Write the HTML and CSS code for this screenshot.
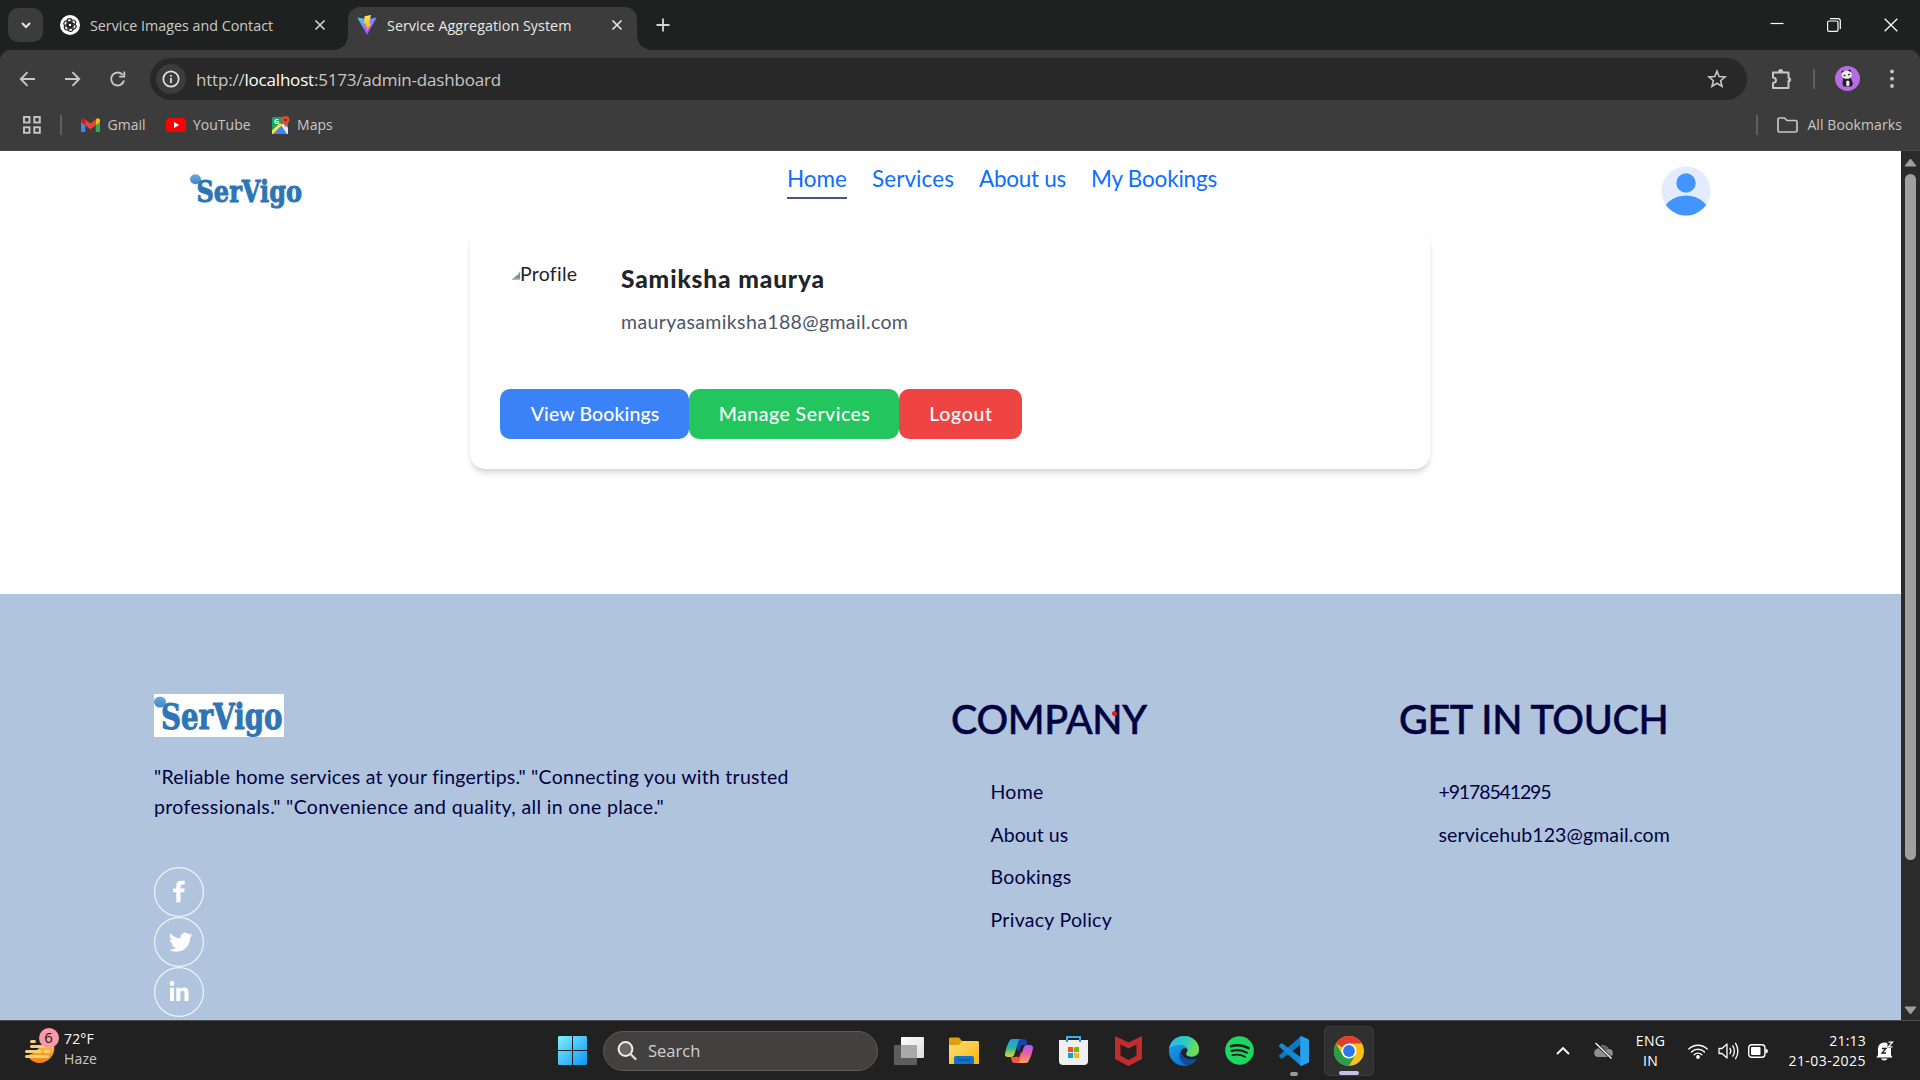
FILE: index.html
```html
<!DOCTYPE html>
<html lang="en">
<head>
<meta charset="utf-8">
<title>Service Aggregation System</title>
<link rel="stylesheet" href="styles.css">
</head>
<body>
<div class="screen">
  <div class="tabstrip">
    <div class="tab-search"><svg width="10" height="7" viewBox="0 0 10 7"><path d="M1 1l4 4 4-4" fill="none" stroke="#e3e3e3" stroke-width="2"/></svg></div>
    <div class="tab tab-idle">
      <svg class="favicon" width="20" height="20" viewBox="0 0 20 20"><circle cx="10" cy="10" r="10" fill="#fff"/><g fill="none" stroke="#222" stroke-width="1.1"><rect x="7" y="3.6" width="5" height="8.6" rx="2.5"/><rect x="7" y="3.6" width="5" height="8.6" rx="2.5" transform="rotate(60 10 10)"/><rect x="7" y="3.6" width="5" height="8.6" rx="2.5" transform="rotate(120 10 10)"/><rect x="7" y="3.6" width="5" height="8.6" rx="2.5" transform="rotate(180 10 10)"/><rect x="7" y="3.6" width="5" height="8.6" rx="2.5" transform="rotate(240 10 10)"/><rect x="7" y="3.6" width="5" height="8.6" rx="2.5" transform="rotate(300 10 10)"/></g></svg>
      <span class="tab-title">Service Images and Contact</span>
      <svg width="12" height="12" viewBox="0 0 12 12"><path d="M1.5 1.5l9 9M10.5 1.5l-9 9" stroke="#d0d0d0" stroke-width="1.7"/></svg>
    </div>
    <div class="tab tab-active">
      <svg class="favicon" width="20" height="20" viewBox="0 0 20 20"><defs><linearGradient id="va" x1="0" y1="0" x2=".6" y2="1"><stop offset="0" stop-color="#41d1ff"/><stop offset="1" stop-color="#bd34fe"/></linearGradient><linearGradient id="vb" x1="0" y1="0" x2="0" y2="1"><stop offset="0" stop-color="#ffea83"/><stop offset=".2" stop-color="#ffdd35"/><stop offset="1" stop-color="#ffa800"/></linearGradient></defs><path d="M.3 2.5L10 20 19.7 2.5 10.5 4.2z" fill="url(#va)"/><path d="M14 0L7.6 1.300 7 9l2.400-.4-.7 3.500 1.700-.5L9.500 17l4.800-8.800-2.400.4z" fill="url(#vb)"/></svg>
      <span class="tab-title">Service Aggregation System</span>
      <svg width="12" height="12" viewBox="0 0 12 12"><path d="M1.5 1.5l9 9M10.5 1.5l-9 9" stroke="#e3e3e3" stroke-width="1.7"/></svg>
    </div>
    <svg class="new-tab" width="14" height="14" viewBox="0 0 14 14"><path d="M7 .5v13M.5 7h13" stroke="#d5d5d5" stroke-width="1.8"/></svg>
    <div class="window-controls">
      <svg width="14" height="14" viewBox="0 0 14 14"><path d="M.5 5.500h13" stroke="#fff" stroke-width="1.200"/></svg>
      <svg width="14" height="14" viewBox="0 0 14 14"><rect x=".6" y="3" width="10.400" height="10.400" rx="1.500" fill="none" stroke="#fff" stroke-width="1.200"/><path d="M3 .7h8a2.300 2.300 0 0 1 2.300 2.300v8" fill="none" stroke="#fff" stroke-width="1.200"/></svg>
      <svg width="14" height="14" viewBox="0 0 14 14"><path d="M.7.7l12.600 12.600M13.300.7L.7 13.300" stroke="#fff" stroke-width="1.300"/></svg>
    </div>
  </div>

  <div class="toolbar">
    <svg class="nav-icon" width="16" height="16" viewBox="0 0 16 16"><path d="M15 8H1M7.500 1.200L.8 8l6.700 6.800" fill="none" stroke="#c7c7c7" stroke-width="1.900"/></svg>
    <svg class="nav-icon" width="16" height="16" viewBox="0 0 16 16"><path d="M0 8h14M7.500 1.200L14.200 8l-6.700 6.800" fill="none" stroke="#c7c7c7" stroke-width="1.900"/></svg>
    <svg class="nav-icon reload" width="16" height="16" viewBox="0 0 16 16"><path d="M14 9.500A6.500 6.500 0 1 1 12.800 4" fill="none" stroke="#c7c7c7" stroke-width="1.900"/><path d="M15.200.5v6H9.200V4.700h4.200V.5z" fill="#c7c7c7"/></svg>
    <div class="omnibox">
      <div class="site-info"><svg width="18" height="18" viewBox="0 0 18 18"><circle cx="9" cy="9" r="7.700" fill="none" stroke="#e3e3e3" stroke-width="1.700"/><path d="M9 8v5M9 5v1.800" stroke="#e3e3e3" stroke-width="1.700"/></svg></div>
      <span class="url">http://<span class="host">localhost</span>:5173/admin-dashboard</span>
      <svg class="star" width="20" height="20" viewBox="0 0 20 20"><path d="M10 2.200l2.200 5.400 5.800.4-4.400 3.700 1.400 5.700-5-3.100-5 3.100 1.400-5.700L2 8l5.800-.4z" fill="none" stroke="#c7c7c7" stroke-width="1.600"/></svg>
    </div>
    <svg class="puzzle" width="22" height="22" viewBox="0 0 22 22"><path d="M2 4.500h15.500v5.300a2 2 0 0 1 0 3.400V20H2v-5c4-.5 4-5 0-5.500z" fill="none" stroke="#c7c7c7" stroke-width="2" stroke-linejoin="round"/><path d="M7 4a2.600 2.900 0 0 1 5.200 0zM18 9a2.700 2.700 0 0 1 0 5.300z" fill="#c7c7c7"/></svg>
    <i class="divider toolbar-divider"></i>
    <svg class="avatar" width="25" height="25" viewBox="0 0 25 25"><circle cx="12.500" cy="12.500" r="12.500" fill="#b56be3"/><circle cx="8" cy="6" r="1.500" fill="#222"/><circle cx="14.500" cy="5" r="1.500" fill="#222"/><path d="M8 12h8l2 6-1.500 2.500H8.500L7.500 18z" fill="#222"/><ellipse cx="11.700" cy="8.800" rx="5.200" ry="4" fill="#eee"/><path d="M8.500 10l2-.8M13 9l2-.8" stroke="#222" stroke-width="1.300"/><rect x="11.200" y="14.500" width="3.200" height="5.500" rx="1.500" fill="#eee"/></svg>
    <svg class="menu-dots" width="4" height="20" viewBox="0 0 4 20"><g fill="#c7c7c7"><circle cx="2" cy="2.500" r="1.900"/><circle cx="2" cy="9.700" r="1.900"/><circle cx="2" cy="17" r="1.900"/></g></svg>
  </div>

  <div class="bookmarks">
    <svg class="apps" width="18" height="18" viewBox="0 0 18 18"><g fill="none" stroke="#c7c7c7" stroke-width="1.900"><rect x="1" y="1" width="5.500" height="5.500"/><rect x="11.300" y="1" width="5.500" height="5.500"/><rect x="1" y="11.300" width="5.500" height="5.500"/><rect x="11.300" y="11.300" width="5.500" height="5.500"/></g></svg>
    <i class="divider"></i>
    <svg class="gmail" width="19" height="14" viewBox="0 0 19 14"><path d="M0 2.500L4.300 5v9H1.300A1.300 1.300 0 0 1 0 12.700z" fill="#4285f4"/><path d="M19 2.500L14.700 5v9h3A1.300 1.300 0 0 0 19 12.700z" fill="#34a853"/><path d="M14.700 1.500C17 -.8 19 .5 19 2.500V4l-4.300 3.300z" fill="#fbbc04"/><path d="M4.300 1.500C2-.8 0 .5 0 2.500V4l4.300 3.300z" fill="#c5221f"/><path d="M4.300 1.500l5.200 4 5.200-4v5.800l-5.200 4-5.200-4z" fill="#ea4335"/></svg>
    <span class="bm-label">Gmail</span>
    <svg class="youtube" width="20" height="14" viewBox="0 0 20 14"><rect width="20" height="14" rx="3.500" fill="#f00"/><path d="M8 4l5.200 3L8 10z" fill="#fff"/></svg>
    <span class="bm-label">YouTube</span>
    <svg class="maps" width="18" height="18" viewBox="0 0 18 18"><rect y="1" width="16" height="17" rx="1.500" fill="#1ea362"/><path d="M0 18L9 8.500l7 9.500z" fill="#4285f4"/><path d="M0 14.500L8 7l2 2-9 9H0z" fill="#ffe047"/><path d="M9 9l3-2 4 5v6h-1z" fill="#e8eaed"/><text x="2" y="8" class="maps-g">G</text><path d="M13.500 0A4 4 0 0 1 17.500 4c0 3-4 4.500-4 8 0-3.500-4-5-4-8a4 4 0 0 1 4-4z" fill="#dd4b3e"/><circle cx="13.500" cy="4" r="1.400" fill="#822f2b"/></svg>
    <span class="bm-label">Maps</span>
    <i class="divider push"></i>
    <svg class="folder" width="21" height="16" viewBox="0 0 21 16"><path d="M1 13V2.500C1 1.600 1.600 1 2.500 1h5L10 3.500h8.500c.9 0 1.500.6 1.500 1.500v8.500c0 .9-.6 1.500-1.500 1.500h-16C1.600 15 1 14.400 1 13.500z" fill="none" stroke="#c7c7c7" stroke-width="1.700"/></svg>
    <span class="bm-label all">All Bookmarks</span>
  </div>

  <div class="viewport">
    <main class="page">
      <header class="site-header">
        <svg class="logo" width="114" height="36" viewBox="0 0 114 36"><defs><linearGradient id="dot" x1="0" y1="0" x2="0" y2="1"><stop offset="0" stop-color="#6aa9e4"/><stop offset="1" stop-color="#3f87cc"/></linearGradient></defs><ellipse cx="5.500" cy="5.300" rx="5.500" ry="5" fill="url(#dot)"/><text class="logo-text" x="6.500" y="28" textLength="105.500" lengthAdjust="spacingAndGlyphs">SerVigo</text></svg>
        <nav class="site-nav">
          <a class="current">Home</a>
          <a class="n-services">Services</a>
          <a class="n-about">About us</a>
          <a class="n-bookings">My Bookings</a>
        </nav>
        <svg class="user" width="50" height="50" viewBox="0 0 50 50"><defs><clipPath id="uc"><circle cx="25" cy="25" r="24.500"/></clipPath></defs><circle cx="25" cy="25" r="24.500" fill="#e5ebff"/><circle cx="25" cy="17" r="9.700" fill="#4294ff"/><ellipse cx="25" cy="50" rx="24" ry="20.500" fill="#4294ff" clip-path="url(#uc)"/></svg>
      </header>

      <section class="card">
        <div class="profile">
          <div class="photo"><svg width="8" height="9" viewBox="0 0 8 9"><path d="M0 8Q3.500 6 8 0v8z" fill="#c9d5e8"/><path d="M1 7.500L8 2.500v5z" fill="#57a652"/><path d="M0 8.300h7.700V1" fill="none" stroke="#8b8b8b" stroke-width=".8"/></svg><span class="alt">Profile</span></div>
          <div class="identity">
            <h2>Samiksha maurya</h2>
            <p>mauryasamiksha188@gmail.com</p>
          </div>
        </div>
        <div class="actions">
          <button class="btn blue">View Bookings</button>
          <button class="btn green">Manage Services</button>
          <button class="btn red">Logout</button>
        </div>
      </section>

      <footer class="site-footer">
        <div class="about">
          <div class="footer-logo"><svg width="130" height="43" viewBox="0 0 130 43"><ellipse cx="6" cy="8" rx="6" ry="5.500" fill="url(#dot)"/><text class="logo-text big" x="7" y="35" textLength="121.500" lengthAdjust="spacingAndGlyphs">SerVigo</text></svg></div>
          <p><span class="f-one">"Reliable home services at your fingertips." "Connecting you with trusted</span><br><span class="f-two">professionals." "Convenience and quality, all in one place."</span></p>
          <div class="socials">
            <svg width="50" height="50" viewBox="0 0 50 50"><circle cx="25" cy="25" r="24.400" fill="none" stroke="#fff" stroke-opacity=".8" stroke-width="1.200"/><path d="M22.300 35.300V25.200H19v-3.800h3.300v-2.600c0-3.400 1.800-5 5-5h3.500v3.700h-2.300c-1.400 0-2 .6-2 1.900v2h4.200l-.5 3.800h-3.700v10.100z" fill="#fff"/></svg>
            <svg width="50" height="50" viewBox="0 0 50 50"><circle cx="25" cy="25" r="24.400" fill="none" stroke="#fff" stroke-opacity=".8" stroke-width="1.200"/><path transform="translate(15 13.500) scale(.98)" d="M23.950 4.570a10 10 0 0 1-2.820.77 4.960 4.960 0 0 0 2.160-2.720c-.95.550-2 .95-3.130 1.180a4.920 4.920 0 0 0-8.380 4.480C7.690 8.100 4.070 6.130 1.640 3.160a4.920 4.920 0 0 0 1.520 6.570 4.900 4.900 0 0 1-2.230-.61v.06c0 2.380 1.700 4.370 3.950 4.820a5 5 0 0 1-2.210.09 4.940 4.940 0 0 0 4.600 3.420A9.870 9.870 0 0 1 0 19.540a14 14 0 0 0 7.550 2.210c9.050 0 14-7.500 14-13.980 0-.21 0-.42-.02-.63a9.940 9.940 0 0 0 2.460-2.550z" fill="#fff"/></svg>
            <svg width="50" height="50" viewBox="0 0 50 50"><circle cx="25" cy="25" r="24.400" fill="none" stroke="#fff" stroke-opacity=".8" stroke-width="1.200"/><circle cx="18" cy="16.500" r="2.400" fill="#fff"/><path d="M16 20.700h4V34h-4zM22.300 20.700h3.900v1.800c.8-1.300 2.200-2.100 4-2.100 3.300 0 4.300 2.200 4.300 5.600v8h-4v-7.300c0-1.800-.4-2.900-1.900-2.900-1.700 0-2.300 1.200-2.300 2.900V34h-4z" fill="#fff"/></svg>
          </div>
        </div>
        <div class="col company">
          <h3>COMPANY</h3>
          <ul>
            <li>Home</li>
            <li class="l-about">About us</li>
            <li>Bookings</li>
            <li>Privacy Policy</li>
          </ul>
          <i class="red-dot"></i>
        </div>
        <div class="col contact">
          <h3>GET IN TOUCH</h3>
          <ul>
            <li class="l-phone">+9178541295</li>
            <li class="l-mail">servicehub123@gmail.com</li>
          </ul>
        </div>
      </footer>
    </main>
    <div class="scrollbar">
      <svg width="13" height="9" viewBox="0 0 13 9"><path d="M6.500 1L12 8H1z" fill="#9f9f9f" stroke="#9f9f9f" stroke-linejoin="round"/></svg>
      <div class="thumb"></div>
      <svg class="down" width="13" height="9" viewBox="0 0 13 9"><path d="M6.500 8L12 1H1z" fill="#9f9f9f" stroke="#9f9f9f" stroke-linejoin="round"/></svg>
    </div>
  </div>

  <div class="taskbar">
    <div class="weather">
      <svg width="36" height="38" viewBox="0 0 36 38"><defs><linearGradient id="sun" x1="0" y1="0" x2="0" y2="1"><stop offset="0" stop-color="#f9bd30"/><stop offset="1" stop-color="#f07c12"/></linearGradient></defs><path d="M16 17.500h13.300C30 26 23.500 34 14.500 34 9.500 34 6 31.500 3.500 28l1-2.500 3-1z" fill="url(#sun)"/><g stroke="#f3cf7c" stroke-width="3" stroke-linecap="round"><path d="M6.500 12.500h3M6.500 17.500h21M1.500 22.500h14M20 22.500h4M1.500 27.500h21"/></g><circle cx="24" cy="9" r="10" fill="#ff99a4"/><text x="23.500" y="14.300" class="badge-text">6</text></svg>
      <div class="weather-text"><span class="temp">72°F</span><span class="haze">Haze</span></div>
    </div>
    <div class="dock">
      <svg class="start" width="29" height="29" viewBox="0 0 29 29"><defs><linearGradient id="win" x1="0" y1="0" x2="1" y2="1"><stop offset="0" stop-color="#7df1ff"/><stop offset="1" stop-color="#0d93f5"/></linearGradient></defs><path d="M1 0h13v14H0V1zM15 0h13l1 1v13H15zM0 15h14v14H1l-1-1zM15 15h14v13l-1 1H15z" fill="url(#win)"/></svg>
      <div class="search"><svg width="20" height="20" viewBox="0 0 20 20"><circle cx="8.500" cy="8" r="6.900" fill="#666" stroke="#eee" stroke-width="2"/><path d="M13.500 13l5 5" stroke="#ddd" stroke-width="2.400" stroke-linecap="round"/></svg><span>Search</span></div>
      <svg class="taskview" width="30" height="28" viewBox="0 0 30 28"><defs><linearGradient id="tv" x1="0" y1="0" x2="1" y2="1"><stop offset="0" stop-color="#fff"/><stop offset="1" stop-color="#ddd"/></linearGradient></defs><rect x="7" width="23" height="21" rx="1" fill="url(#tv)"/><rect y="8" width="23" height="20" rx="1" fill="#6d6d6d" fill-opacity=".8"/><path d="M7 8h16v13H7z" fill="#a9a9a9"/></svg>
      <svg class="files" width="30" height="27" viewBox="0 0 30 27"><defs><linearGradient id="fo" x1="0" y1="0" x2="1" y2="1"><stop offset="0" stop-color="#ffe07a"/><stop offset="1" stop-color="#f9b50f"/></linearGradient></defs><path d="M0 8V1.500L1 .5h9L13 4h16v8H0z" fill="#e0a008"/><path d="M0 8h10l3-4h16l1 1v22H0z" fill="url(#fo)"/><path d="M5 27v-6a2 2 0 0 1 2-2h16a2 2 0 0 1 2 2v6z" fill="#0f73c6"/><path d="M9 23h12" stroke="#0a4f95" stroke-width="1.300"/></svg>
      <svg class="copilot" width="28" height="26" viewBox="0 0 28 26"><defs><linearGradient id="c1" x1="0" y1="0" x2="0" y2="1"><stop offset="0" stop-color="#1e9be8"/><stop offset=".5" stop-color="#2bb6a0"/><stop offset="1" stop-color="#e8d12c"/></linearGradient><linearGradient id="c2" x1="0" y1="0" x2="0" y2="1"><stop offset="0" stop-color="#a45bed"/><stop offset=".5" stop-color="#ec5fa3"/><stop offset="1" stop-color="#ffa35a"/></linearGradient></defs><path d="M7 1h12q2 0 2.500 2L22 7h-4q-2 0-2.700 2L14 14z" fill="#1546b8"/><path d="M21 25H9q-2 0-2.500-3L6 19h4q2 0 2.600-2L15 10z" fill="#f0563c"/><path d="M7 1h9q-2 0-2.700 2.200L9.500 16q-1 3-3.500 3H3q-3.500 0-3-3.500Q1.500 8 4 3.500 5 1 7 1z" fill="url(#c1)"/><path d="M21 25h-9q2 0 2.700-2.200L18.500 10Q19.500 7 22 7h3q3.500 0 3 3.500-1.500 7.500-4 12Q23 25 21 25z" fill="url(#c2)"/><path d="M15.300 9Q16 7 18 7h1l-5 12h-2.200z" fill="#212121"/></svg>
      <svg class="store" width="29" height="29" viewBox="0 0 29 29"><path d="M8 5V1h13v4" fill="none" stroke="#30b4f2" stroke-width="2"/><path d="M0 4h29v21a4 4 0 0 1-4 4H4a4 4 0 0 1-4-4z" fill="#f0f0f0"/><path d="M8 4v2M21 4v2" stroke="#1790d8" stroke-width="2"/><path d="M9 11h5v5H9z" fill="#f25022"/><path d="M15 11h5v5h-5z" fill="#7fba00"/><path d="M9 17h5v5H9z" fill="#00a4ef"/><path d="M15 17h5v5h-5z" fill="#ffb900"/></svg>
      <svg class="mcafee" width="27" height="30" viewBox="0 0 27 30"><path d="M0 0l13.500 6.500L27 0v23l-13.500 7L0 23zM5.500 8.500v11.300l8 4.200 8-4.200V8.500l-8 4z" fill="#c22c2c" fill-rule="evenodd"/></svg>
      <svg class="edge" width="30" height="30" viewBox="0 0 30 30"><defs><linearGradient id="e1" x1="0" y1="0" x2="1" y2=".3"><stop offset="0" stop-color="#2fb4ee"/><stop offset=".55" stop-color="#2cc7c8"/><stop offset="1" stop-color="#6fe04b"/></linearGradient><linearGradient id="e2" x1="0" y1="0" x2=".6" y2="1"><stop offset="0" stop-color="#1eaaf0"/><stop offset="1" stop-color="#0a6fce"/></linearGradient></defs><circle cx="15" cy="15" r="15" fill="url(#e2)"/><path d="M0 13C1 5 7.500 0 15 0c9 0 15 6.500 15 13 0 5-3.500 7.500-7.500 7.500-3.500 0-5.500-1.300-5.500-2.500 0-.8 1.500-1.500 1.500-4C18.500 11 15.500 9 12 9 6 9 1 11 0 13z" fill="url(#e1)"/><path d="M12 14.500c-4 6 0 12.500 6 15.100 4-.8 8-3.600 10-7.600-6 3-16 1-16-7.500z" fill="#114a9c"/><path d="M18.500 13c0 3-1.500 3.500-1.500 5 0 1.500 2 3 5.500 3 3 0 5.500-1.500 8-4l.5 4-2.500 1.500C22 25 13 23 12 16c0-3 3-5 6.500-3z" fill="#212121"/></svg>
      <svg class="spotify" width="29" height="29" viewBox="0 0 29 29"><circle cx="14.500" cy="14.500" r="14.300" fill="#1ed760"/><g fill="none" stroke="#1c1c1c" stroke-linecap="round"><path d="M6 10.200c6-1.700 12.500-1 17.600 1.900" stroke-width="2.600"/><path d="M6.700 14.900c5-1.400 10.500-.8 15 1.700" stroke-width="2.200"/><path d="M7.500 19.200c4.300-1 8.600-.6 12.500 1.600" stroke-width="1.800"/></g></svg>
      <div class="app-slot vscode"><svg width="30" height="30" viewBox="0 0 30 30"><path d="M22 0v8.500L3.500 22.500Q2.500 23 1.700 22.300L.3 20.700q-.6-.8.2-1.600z" fill="#0a79c0"/><path d="M22 30v-8.500L3.500 7.500Q2.500 7 1.700 7.700L.3 9.300q-.6.800.2 1.600z" fill="#1489d4"/><path d="M22 0l7 3q1 .5 1 1.500v21q0 1-1 1.500l-7 3q-.8-.3-.8-1.500v-27Q21.200.5 22 0z" fill="#27a0f0"/></svg><i class="dot-indicator"></i></div>
      <div class="app-slot chrome"><svg width="30" height="30" viewBox="0 0 30 30"><circle cx="15" cy="15" r="15" fill="#fbc116"/><path d="M15 15L2 7.500A15 15 0 0 1 28 7.500H15z" fill="#e33b2e"/><path d="M2 7.500A15 15 0 0 0 15 30l6.500-11.200L15 15 8.500 18.800z" fill="#2a9d48"/><circle cx="15" cy="15" r="7.500" fill="#fff"/><circle cx="15" cy="15" r="5.900" fill="#2a78ea"/></svg><i class="bar-indicator"></i></div>
    </div>
    <div class="tray">
      <svg class="chev" width="14" height="9" viewBox="0 0 14 9"><path d="M1 8l6-6 6 6" fill="none" stroke="#fff" stroke-width="1.900"/></svg>
      <svg class="cloud" width="20" height="16" viewBox="0 0 20 16"><path d="M4.500 14a4.200 4.200 0 0 1 0-8.200A6 6 0 0 1 15.500 6a4 4 0 0 1 .5 8z" fill="#8f8f8f"/><path d="M5 5.500A6 6 0 0 1 15.500 6l-5 3z" fill="#646464"/><path d="M2.500 0l16 15.500" stroke="#212121" stroke-width="3"/><path d="M2.500 0l16 15.500" stroke="#fff" stroke-width="1.300"/></svg>
      <div class="lang"><span>ENG</span><span>IN</span></div>
      <svg class="wifi" width="20" height="16" viewBox="0 0 20 16"><g fill="none" stroke="#fff" stroke-width="1.400" stroke-linecap="round"><path d="M.8 6a13 13 0 0 1 18.400 0M3.500 8.900a9.200 9.200 0 0 1 13 0M6.200 11.700a5.400 5.400 0 0 1 7.600 0"/></g><circle cx="10" cy="14" r="1.900" fill="#fff"/></svg>
      <svg class="sound" width="21" height="18" viewBox="0 0 21 18"><g fill="none" stroke="#fff" stroke-width="1.300" stroke-linecap="round" stroke-linejoin="round"><path d="M1 6.500h3L9 2v14l-5-4.500H1zM12 6.300q1.700 2.700 0 5.400M14.800 3.800q3.200 5.200 0 10.400M17.600 1.300q4.600 7.700 0 15.400"/></g></svg>
      <svg class="battery" width="20" height="14" viewBox="0 0 20 14"><rect x=".7" y=".7" width="16.200" height="12.600" rx="3" fill="none" stroke="#fff" stroke-width="1.400"/><rect x="3" y="3" width="9.500" height="8" rx="1" fill="#fff"/><path d="M17.500 4.500q2.500.5 2.500 2.500t-2.500 2.500z" fill="#fff"/></svg>
      <div class="clock"><span>21:13</span><span class="date">21-03-2025</span></div>
      <svg class="bell" width="18" height="20" viewBox="0 0 18 20"><path d="M2 14V7.500A6 6 0 0 1 8 1.500c4 0 7 2 7 6.500v6l1.500 2.500H.3zM5 17.500h6.500a3.300 2.500 0 0 1-6.500 0z" fill="#fff"/><path d="M6 7.500h4l-4 4.500h4" fill="none" stroke="#212121" stroke-width="1.300"/><path d="M11.500 0H18v6.800h-6.500z" fill="#212121"/><path d="M12.500 1.200h4l-4 4.600h4" fill="none" stroke="#fff" stroke-width="1.300"/></svg>
    </div>
  </div>
</div>
</body>
</html>
```
FILE: styles.css
```css
* { box-sizing: border-box; }
body { margin: 0; background: #fff; font-family: "Open Sans", "Noto Sans", sans-serif; }
svg { display: block; flex: none; overflow: visible; }
.screen { width: 1920px; height: 1080px; overflow: hidden; display: flex; flex-direction: column; }

/* tab strip */
.tabstrip { position: relative; z-index: 1; flex: none; height: 50px; background: #1f2120; display: flex; align-items: flex-start; white-space: nowrap; }
.tab-search { width: 35px; height: 34px; margin: 8px 0 0 8px; border-radius: 10px; background: #3c3c3c; display: flex; align-items: center; justify-content: center; }
.tab { height: 43px; margin-top: 7px; display: flex; align-items: center; padding-bottom: 7px; font-size: 14.3px; }
.tab-idle { width: 305px; padding-left: 17px; color: #c9c9c9; }
.tab-active { width: 289px; padding-left: 9px; background: #3c3c3c; color: #e8e8e8; border-radius: 12px 12px 0 0; position: relative; letter-spacing: .05px; }
.tab-active::before, .tab-active::after { content: ""; position: absolute; bottom: 0; width: 14px; height: 14px; }
.tab-active::before { left: -14px; background: radial-gradient(circle at 0 0, transparent 13.5px, #3c3c3c 14px); }
.tab-active::after { right: -14px; background: radial-gradient(circle at 100% 0, transparent 13.5px, #3c3c3c 14px); }
.tab-title { flex: none; width: 224px; margin-left: 10px; }
.new-tab { margin: 18px 0 0 19px; }
.window-controls { margin: 18px 22px 0 auto; display: flex; gap: 43px; }

/* toolbar */
.toolbar { flex: none; height: 57px; background: #3c3c3c; border-radius: 10px 10px 0 0; box-shadow: 0 -10px 0 #1f2120; display: flex; align-items: center; padding: 0 26px 0 20px; }
.nav-icon { margin-right: 28.5px; }
.nav-icon.reload { margin: 0 28px 0 .5px; }
.omnibox { width: 1597px; height: 42px; margin-left: -3.5px; border-radius: 21px; background: #282828; display: flex; align-items: center; padding: 0 20px 0 6px; }
.site-info { width: 30px; height: 30px; border-radius: 50%; background: #3c3c3c; display: flex; align-items: center; justify-content: center; }
.url { margin-left: 10px; padding-top: 1px; font-size: 17px; letter-spacing: -.2px; color: #c7c7c7; white-space: nowrap; }
.host { color: #fff; }
.star { margin-left: auto; }
.puzzle { margin-left: 24px; }
.divider { flex: none; width: 2px; height: 20px; background: #5e5e5e; }
.toolbar-divider { margin-left: 20px; }
.avatar { margin-left: 20px; }
.menu-dots { margin-left: auto; }

/* bookmarks */
.bookmarks { flex: none; height: 44px; background: #3c3c3c; border-bottom: 1px solid #4a4a4a; display: flex; align-items: center; padding: 0 18px 8px 23px; font-size: 14px; color: #c7c7c7; white-space: nowrap; }
.bookmarks .divider { margin: 0 19px; }
.bm-label { margin-left: 7.5px; }
.bm-label.all { margin-left: 9px; letter-spacing: .1px; }
.youtube { margin-left: 20px; }
.maps { margin-left: 21px; }
.maps-g { font: bold 7px "Open Sans", sans-serif; fill: #fff; }
.bookmarks .push { margin-left: auto; }

/* page */
.viewport { flex: none; height: 869px; display: flex; }
.page { width: 1901px; background: #fff; color: #212529; font-family: Lato, sans-serif; font-size: 19.5px; display: flex; flex-direction: column; }
.site-header { height: 78px; display: flex; padding: 0 190px; }
.logo { margin-top: 23px; }
.logo-text { font: bold 30px "DejaVu Serif", serif; fill: #2e75b6; stroke: #2e75b6; stroke-width: 1px; }
.logo-text.big { font-size: 35px; }
.site-nav { margin: 12px 0 0 483px; display: flex; gap: 25px; font-size: 22.5px; line-height: 31px; color: #0d6efd; white-space: nowrap; }
.site-nav a { height: 36px; }
.site-nav .current { border-bottom: 2px solid #495388; }
.n-services { letter-spacing: .076px; }
.n-about { letter-spacing: -.275px; }
.n-bookings { letter-spacing: -.197px; }
.user { margin: 14.5px 0 0 auto; }
.card { width: 960px; height: 240px; margin: 0 0 0 470px; border-radius: 15px; padding: 30px; box-shadow: 0 5px 7px -1px rgba(0,0,0,.12), 0 3px 5px -2px rgba(0,0,0,.1); white-space: nowrap; clip-path: inset(0 -20px -20px -20px); }
.profile { height: 130px; display: flex; }
.photo { width: 121px; padding-left: 12px; display: flex; line-height: 30px; }
.photo svg { margin-top: 12px; }
.alt { letter-spacing: .266px; }
.identity h2 { margin: 5px 0 0; font-size: 24.5px; line-height: 30px; font-weight: 900; letter-spacing: .867px; }
.identity p { margin: 13px 0 0; line-height: 30px; color: #4a5568; letter-spacing: .37px; }
.actions { display: flex; }
.btn { height: 50px; border: 0; border-radius: 10px; padding: 0 0 2px 1px; color: #fff; font: 500 19.5px Lato, sans-serif; }
.blue { width: 189px; background: #3b82f6; letter-spacing: .1px; }
.green { width: 210px; background: #22c55e; letter-spacing: .48px; }
.red { width: 123px; background: #ef4444; letter-spacing: .7px; }

/* footer */
.site-footer { height: 426px; margin-top: 125px; background: #b0c4de; color: #02023f; display: flex; padding: 100px 0 0 154px; white-space: nowrap; overflow: hidden; }
.about { width: 797px; }
.footer-logo { width: 130px; height: 43px; background: #fff; }
.about p { margin: 25px 0 45px; line-height: 30px; }
.f-one { letter-spacing: .254px; }
.f-two { letter-spacing: .358px; }
.col { position: relative; width: 448px; }
.col h3 { margin: 0; font-size: 39.5px; line-height: 49px; font-weight: 500; letter-spacing: -.37px; -webkit-text-stroke: .5px currentColor; }
.col ul { list-style: none; margin: 34px 0 0; padding: 0 0 0 39.5px; }
.col li { height: 42.6px; line-height: 30px; letter-spacing: .28px; }
.col .l-about { letter-spacing: .05px; }
.col .l-phone { letter-spacing: -1.13px; }
.col .l-mail { letter-spacing: .11px; }
.red-dot { position: absolute; left: 161px; top: 17px; width: 5px; height: 5px; border-radius: 50%; background: #f01818; }

.scrollbar { width: 19px; background: #2b2b2b; display: flex; flex-direction: column; align-items: center; padding: 7px 0 5px; }
.thumb { width: 11px; height: 686px; margin-top: 7px; border-radius: 6px; background: #9f9f9f; }
.down { margin-top: auto; }

/* taskbar */
.taskbar { flex: none; height: 60px; background: #212121; border-top: 1px solid #4c4c4a; display: flex; color: #fff; font-size: 14px; white-space: nowrap; }
.weather { width: 558px; display: flex; padding: 8px 0 0 25px; }
.badge-text { font: 15px "Open Sans", sans-serif; fill: #1b1b1b; text-anchor: middle; }
.weather-text { display: flex; flex-direction: column; align-items: flex-start; line-height: 20px; margin-left: 3px; }
.temp { letter-spacing: .15px; }
.haze { color: #c8c8c8; letter-spacing: .15px; }
.dock { width: 816px; display: flex; align-items: center; }
.search { width: 275px; height: 40px; margin-left: 16px; border-radius: 20px; border: 1px solid #5b5958; background: #424140; display: flex; align-items: center; padding-left: 13px; font-size: 16.5px; color: #d0d0d0; }
.search span { margin-left: 11px; }
.taskview { margin-left: 16px; }
.files { margin-left: 25px; }
.copilot { margin-left: 26px; }
.store { margin-left: 26px; }
.mcafee { margin-left: 27px; }
.edge { margin-left: 27px; }
.spotify { margin-left: 26px; }
.app-slot { position: relative; width: 50px; height: 50px; display: flex; align-items: center; justify-content: center; }
.vscode { margin-left: 15px; }
.chrome { margin-left: 5px; background: #303030; border: 1px solid #3b3b3b; border-radius: 5px; }
.app-slot i { position: absolute; bottom: 0; height: 4px; border-radius: 2px; }
.dot-indicator { left: 21px; width: 8px; background: #9a9a9a; }
.bar-indicator { left: 14px; width: 20px; background: #c5bdec; }
.tray { flex: 1; display: flex; align-items: center; padding-left: 182px; }
.cloud { margin-left: 23px; }
.lang { width: 75px; display: flex; flex-direction: column; align-items: center; line-height: 20px; letter-spacing: .3px; }
.sound { margin-left: 10px; }
.battery { margin-left: 9px; }
.clock { margin-left: auto; display: flex; flex-direction: column; align-items: flex-end; line-height: 20px; letter-spacing: .2px; }
.date { letter-spacing: .45px; }
.bell { margin: 0 26px 0 10px; }
```
